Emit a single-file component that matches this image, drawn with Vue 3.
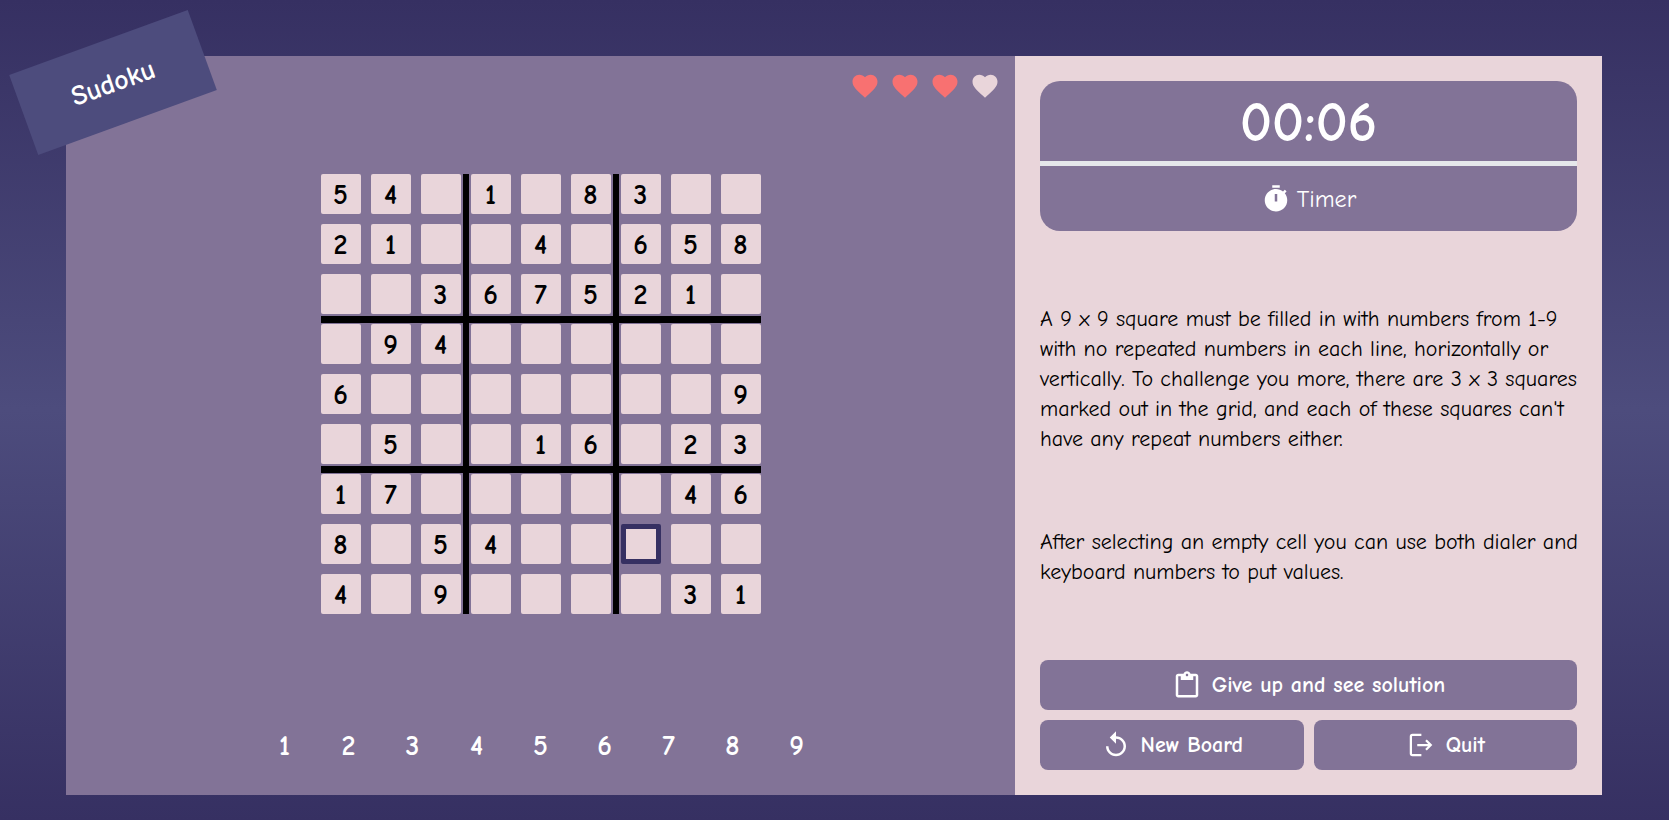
<script setup>
import { ref, computed } from 'vue'

const rows = [
  '54 1 83  ',
  '21  4 658',
  '  367521 ',
  ' 94      ',
  '6       9',
  ' 5  16 23',
  '17     46',
  '8 54     ',
  '4 9    31',
]
const board = ref(rows.map((r) => r.split('').map((c) => c.trim())))
const selected = ref({ r: 7, c: 6 })
const lives = ref(3)
const seconds = ref(6)

const clock = computed(() => {
  const m = String(Math.floor(seconds.value / 60)).padStart(2, '0')
  const s = String(seconds.value % 60).padStart(2, '0')
  return `${m}:${s}`
})

function select(r, c) {
  if (!rows[r][c].trim()) selected.value = { r, c }
}
function put(n) {
  board.value[selected.value.r][selected.value.c] = String(n)
}
</script>

<template>
  <div class="page">
    <main class="card">
      <h1 class="title">Sudoku</h1>

      <section class="game">
        <div class="lives" role="img" :aria-label="`${lives} lives left`">
          <svg v-for="i in 4" :key="i" class="heart" :class="{ lost: i > lives }" viewBox="0 0 24 24">
            <path d="m12 21.35-1.45-1.32C5.4 15.36 2 12.28 2 8.5 2 5.42 4.42 3 7.5 3c1.74 0 3.41.81 4.5 2.09C13.09 3.81 14.76 3 16.5 3 19.58 3 22 5.42 22 8.5c0 3.78-3.4 6.86-8.55 11.54L12 21.35z" />
          </svg>
        </div>

        <div class="board-area">
          <div class="board">
            <template v-for="(row, r) in board" :key="r">
              <button
                v-for="(value, c) in row"
                :key="c"
                type="button"
                class="cell"
                :class="{ selected: selected.r === r && selected.c === c }"
                :aria-label="`Row ${r + 1}, column ${c + 1}`"
                @click="select(r, c)"
              >{{ value }}</button>
            </template>
            <span class="bar across first"></span>
            <span class="bar across second"></span>
            <span class="bar down first"></span>
            <span class="bar down second"></span>
          </div>
        </div>

        <div class="dialer">
          <button v-for="n in 9" :key="n" type="button" class="digit" @click="put(n)">{{ n }}</button>
        </div>
      </section>

      <aside class="panel">
        <div class="timer">
          <div class="clock">{{ clock }}</div>
          <div class="caption">
            <svg class="icon" viewBox="0 0 24 24">
              <path d="M9 1h6v2H9zm10.03 6.39 1.42-1.42c-.43-.51-.9-.99-1.41-1.41l-1.42 1.42C16.07 4.74 14.12 4 12 4c-4.97 0-9 4.03-9 9s4.02 9 9 9 9-4.03 9-9c0-2.12-.74-4.07-1.97-5.61zM13 14h-2V8h2v6z" />
            </svg>
            <span>Timer</span>
          </div>
        </div>

        <p class="text">A 9 x 9 square must be filled in with numbers from 1-9 with no repeated numbers in each line, horizontally or vertically. To challenge you more, there are 3 x 3 squares marked out in the grid, and each of these squares can't have any repeat numbers either.</p>

        <p class="text">After selecting an empty cell you can use both dialer and keyboard numbers to put values.</p>

        <div class="actions">
          <button type="button" class="action wide">
            <svg class="icon" viewBox="0 0 24 24">
              <path d="M19 3h-4.18C14.4 1.84 13.3 1 12 1s-2.4.84-2.82 2H5c-1.1 0-2 .9-2 2v15c0 1.1.9 2 2 2h14c1.1 0 2-.9 2-2V5c0-1.1-.9-2-2-2zm-7 0c.55 0 1 .45 1 1s-.45 1-1 1-1-.45-1-1 .45-1 1-1zm7 17H5V5h2v3h10V5h2v15z" />
            </svg>
            <span>Give up and see solution</span>
          </button>
          <button type="button" class="action">
            <svg class="icon" viewBox="0 0 24 24">
              <path d="M12 5V1L7 6l5 5V7c3.31 0 6 2.69 6 6s-2.69 6-6 6-6-2.69-6-6H4c0 4.42 3.58 8 8 8s8-3.58 8-8-3.58-8-8-8z" />
            </svg>
            <span>New Board</span>
          </button>
          <button type="button" class="action">
            <svg class="icon line" viewBox="0 0 24 24">
              <path d="M12.3 3.9H5.2Q3.9 3.9 3.9 5.2V18.8Q3.9 20.1 5.2 20.1H12.3M9 12H19.6M16 8.2 19.8 12 16 15.8" />
            </svg>
            <span>Quit</span>
          </button>
        </div>
      </aside>
    </main>
  </div>
</template>

<style>
body {
  margin: 0;
}
</style>

<style scoped>
.page {
  box-sizing: border-box;
  min-height: 100vh;
  padding: 56px 67px 25px 66px;
  display: flex;
  background: linear-gradient(#363062, #4d4c7d, #363062);
  font-family: "Comic Sans MS", "Comic Neue", "Noto Sans", sans-serif;
  color: #000;
}
button {
  border: 0;
  padding: 0;
  font: inherit;
  color: inherit;
  cursor: pointer;
}
.card {
  position: relative;
  flex: 1;
  display: flex;
}
.title {
  position: absolute;
  left: -48px;
  top: -16px;
  width: 190px;
  height: 85px;
  margin: 0;
  display: flex;
  align-items: center;
  justify-content: center;
  background: #4d4c7d;
  color: #fff;
  font-size: 28px;
  transform: rotate(-20deg);
}
.game {
  flex: 1;
  display: flex;
  flex-direction: column;
  background: #827397;
}
.lives {
  display: flex;
  justify-content: flex-end;
  gap: 10px;
  padding: 15px 15px 0;
}
.heart {
  width: 30px;
  height: 30px;
  fill: #f87171;
}
.heart.lost {
  fill: #e9d5da;
}
.board-area {
  flex: 1;
  display: flex;
  align-items: center;
  justify-content: center;
}
.board {
  position: relative;
  display: grid;
  grid-template-columns: repeat(9, 40px);
  grid-auto-rows: 40px;
  gap: 10px;
}
.cell {
  padding-top: 3px;
  border-radius: 2px;
  background: #e9d5da;
  font-size: 28px;
  font-weight: 700;
  line-height: 37px;
}
.cell.selected {
  border: 5px solid #363062;
}
.bar {
  position: absolute;
  background: #000;
}
.bar.down {
  top: 0;
  bottom: 0;
  width: 6px;
}
.bar.across {
  left: 0;
  right: 0;
  height: 7px;
}
.down.first {
  left: 142px;
}
.down.second {
  left: 292px;
}
.across.first {
  top: 142px;
}
.across.second {
  top: 292px;
}
.dialer {
  display: flex;
  justify-content: center;
  gap: 20px;
  padding: 39px 15px 29px;
}
.digit {
  width: 44px;
  height: 40px;
  background: none;
  color: #fff;
  font-size: 28px;
  font-weight: 700;
}
.panel {
  box-sizing: border-box;
  width: 38%;
  min-width: 587px;
  padding: 25px;
  display: flex;
  flex-direction: column;
  justify-content: space-between;
  background: #e9d5da;
}
.timer {
  border-radius: 20px;
  background: #827397;
  color: #fff;
}
.clock {
  box-sizing: border-box;
  height: 85px;
  padding-top: 3px;
  border-bottom: 5px solid #e5e7eb;
  display: flex;
  align-items: center;
  justify-content: center;
  font-size: 56px;
  font-weight: 700;
}
.caption {
  height: 65px;
  display: flex;
  align-items: center;
  justify-content: center;
  gap: 6px;
  font-size: 24px;
}
.text {
  margin: 0 -5px 0 0;
  font-size: 22px;
  line-height: 30px;
}
.actions {
  display: grid;
  grid-template-columns: 1fr 1fr;
  gap: 10px;
}
.action {
  height: 50px;
  display: flex;
  align-items: center;
  justify-content: center;
  gap: 10px;
  border-radius: 8px;
  background: #827397;
  color: #fff;
  font-size: 22px;
  font-weight: 700;
}
.action.wide {
  grid-column: span 2;
}
.icon {
  width: 30px;
  height: 30px;
  fill: #fff;
}
.icon.line {
  fill: none;
  stroke: #fff;
  stroke-width: 1.8;
}
</style>
